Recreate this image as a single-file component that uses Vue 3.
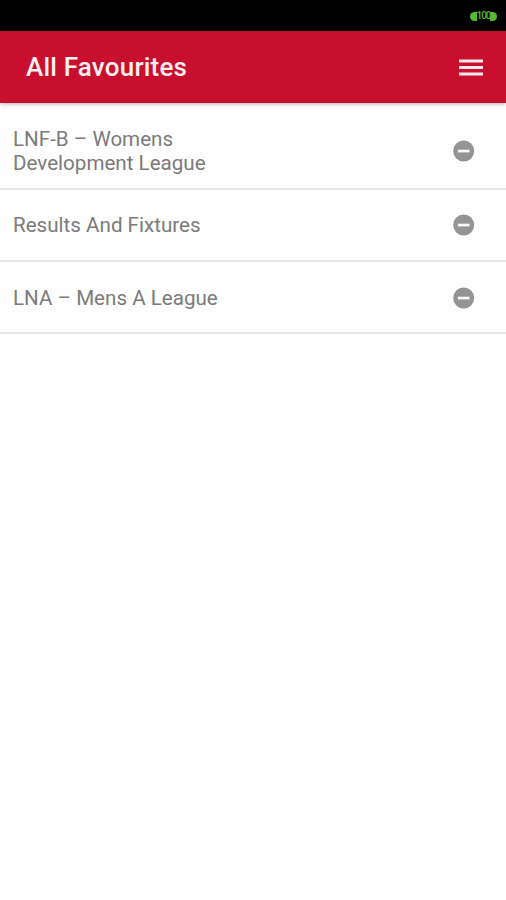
<script setup>
const favourites = [
  { lines: ['LNF-B – Womens', 'Development League'] },
  { lines: ['Results And Fixtures'] },
  { lines: ['LNA – Mens A League'] },
]
</script>

<template>
  <div class="screen">
    <div class="status">
      <div class="battery"><span class="cap"></span><span class="level">100</span><span class="cap right"></span></div>
    </div>
    <header class="bar">
      <h1>All Favourites</h1>
      <button class="menu" aria-label="Menu">
        <svg width="24" height="18" viewBox="0 0 24 18"><path d="M0 0.5h24v3H0zM0 7h24v3H0zM0 13.5h24v3H0z" fill="#fff" fill-opacity=".9" /></svg>
      </button>
    </header>
    <ul class="list">
      <li v-for="item in favourites" :key="item.lines[0]" :class="{ tall: item.lines.length > 1 }">
        <div class="label"><div v-for="line in item.lines" :key="line">{{ line }}</div></div>
        <svg class="remove" width="22" height="22" viewBox="0 0 22 22">
          <circle cx="10.7" cy="11" r="10.5" fill="#949494" />
          <rect x="4.9" y="9.7" width="11.6" height="2.7" fill="#f8f8f8" />
        </svg>
      </li>
    </ul>
  </div>
</template>

<style>
body {
  margin: 0;
  background: #fff;
}
</style>

<style scoped>
.screen {
  min-height: 900px;
  background: #fefefe;
  font-family: Roboto, sans-serif;
}
.status {
  height: 31px;
  box-sizing: border-box;
  padding: 10px 9px 0 0;
  display: flex;
  justify-content: flex-end;
  background: #000;
}
.battery {
  display: flex;
  align-items: center;
  height: 12px;
  color: #57bd32;
}
.cap {
  width: 7px;
  height: 9px;
  border-radius: 5px 0 0 5px;
  background: #55ba30;
}
.cap.right {
  border-radius: 0 5px 5px 0;
}
.level {
  width: 13px;
  display: flex;
  justify-content: center;
  font-size: 10px;
  font-weight: 500;
  line-height: 12px;
  letter-spacing: -1px;
}
.bar {
  height: 72px;
  box-sizing: border-box;
  padding: 0 23px 0 26px;
  display: flex;
  align-items: center;
  justify-content: space-between;
  background: #c8102e;
  box-shadow: 0 1px 4px rgba(0, 0, 0, 0.3);
}
h1 {
  margin: 0;
  padding-bottom: 1px;
  font-size: 26px;
  font-weight: 500;
  line-height: 30px;
  letter-spacing: 0.2px;
  color: #fceff1;
}
.menu {
  display: flex;
  padding: 2px 0 0;
  border: 0;
  background: none;
}
.list {
  margin: 0;
  padding: 0;
  list-style: none;
}
li {
  height: 72px;
  box-sizing: border-box;
  padding: 0 31px 0 13px;
  display: flex;
  align-items: center;
  justify-content: space-between;
  border-bottom: 2px solid #e6e6e6;
}
li.tall {
  height: 87px;
  padding-top: 11px;
}
li:last-child {
  padding-top: 2px;
}
.label {
  font-size: 20.6px;
  line-height: 24px;
  color: #7b7b7b;
}
</style>
